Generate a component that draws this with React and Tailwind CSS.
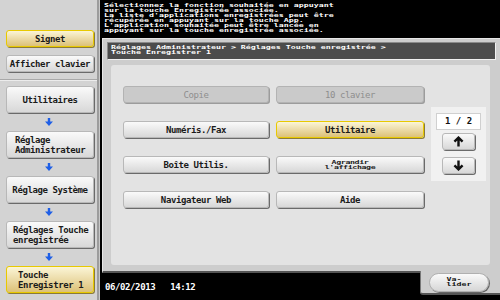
import React from "react";

const mono = "font-['DejaVu_Sans_Mono','Liberation_Mono',monospace]";

const baseBtn =
  "flex items-center justify-center rounded-[3px] border text-[9px] font-bold tracking-[-0.4px] leading-[10px]";
const normalBtn = `${baseBtn} bg-gradient-to-b from-[#fafafa] to-[#d8d8d8] border-[#b8b8b8] text-[#1a1a1a] shadow-[1px_1px_0_#6a6a6a]`;
const yellowBtn = `${baseBtn} bg-gradient-to-b from-[#fbf5d6] to-[#dcc177] border-[#e8c900] text-[#1a1a1a] shadow-[1px_1px_0_#8a7a3a]`;
const disabledBtn = `${baseBtn} bg-[#cacaca] border-[#b3b3b3] !font-normal text-[#8e8e8e] shadow-[1px_1px_0_#9c9c9c]`;

function BlueArrow() {
  return (
    <div className="h-[18px] flex items-center justify-center">
      <svg width="8" height="8" viewBox="0 0 8 8">
        <path d="M2.8 0h2.4v3.5H8L4 8 0 3.5h2.8z" fill="#1f5fe6" />
      </svg>
    </div>
  );
}

function Squashed({ children, className = "" }) {
  return (
    <div
      className={`whitespace-pre text-[8.3px] leading-[8.3px] font-bold scale-y-[0.6] origin-top ${className}`}
    >
      {children}
    </div>
  );
}

function Sidebar() {
  const item = "h-[27px] w-[88px] text-[9px]";
  return (
    <div className="w-[97px] h-full bg-[#d3d3d3] flex flex-col pt-[30px]">
      <div className="px-[6px]">
        <div className={`${yellowBtn} h-[17px] w-[88px]`}>Signet</div>
        <div className={`${normalBtn} h-[17px] w-[88px] mt-[8px]`}>
          Afficher clavier
        </div>
      </div>
      <div className="mt-[7px] h-[2px] border-t border-[#a8a8a8] bg-[#ececec]" />
      <div className="px-[6px] mt-[5px] flex flex-col">
        <div className={`${normalBtn} ${item}`}>Utilitaires</div>
        <BlueArrow />
        <div className={`${normalBtn} ${item} !justify-start pl-[8px] text-left`}>
          Réglage
          <br />
          Administrateur
        </div>
        <BlueArrow />
        <div className={`${normalBtn} ${item}`}>Réglage Système</div>
        <BlueArrow />
        <div className={`${normalBtn} ${item} !justify-start pl-[6px] text-left`}>
          Réglages Touche
          <br />
          enregistrée
        </div>
        <BlueArrow />
        <div className={`${yellowBtn} ${item} !justify-start pl-[11px] text-left`}>
          Touche
          <br />
          Enregistrer 1
        </div>
      </div>
    </div>
  );
}

function Content() {
  const left = "h-[17px] w-[146px]";
  const right = "h-[17px] w-[148px]";
  return (
    <div className="mx-[8px] mt-[5px] mr-[10px] h-[200px] bg-[#e3e3e3] rounded-[3px] flex pl-[12px] pt-[21px]">
      <div className="grid grid-cols-[146px_148px] gap-x-[7px] gap-y-[18px] content-start">
        <div className={`${disabledBtn} ${left}`}>Copie</div>
        <div className={`${disabledBtn} ${right}`}>10 clavier</div>
        <div className={`${normalBtn} ${left}`}>Numéris./Fax</div>
        <div className={`${yellowBtn} ${right}`}>Utilitaire</div>
        <div className={`${normalBtn} ${left}`}>Boîte Utilis.</div>
        <div className={`${normalBtn} ${right} !items-start pt-[3px]`}>
          <Squashed className="text-center">{"Agrandir\nl'affichage"}</Squashed>
        </div>
        <div className={`${normalBtn} ${left}`}>Navigateur Web</div>
        <div className={`${normalBtn} ${right}`}>Aide</div>
      </div>
      <div className="ml-[7px] mt-[21px] w-[55px] h-[74px] bg-[#f1f1f1] flex flex-col items-center pt-[6px]">
        <div className="w-[45px] h-[17px] bg-white border border-[#d0d0d0] flex items-center justify-center text-[9px] font-bold text-[#111]">
          1 / 2
        </div>
        <div className={`${normalBtn} w-[33px] h-[17px] mt-[3px]`}>
          <svg width="11" height="11" viewBox="0 0 10 10">
            <path d="M5 9.5V2M1.3 5.2L5 1.5 8.7 5.2" stroke="#111" strokeWidth="2.2" fill="none" />
          </svg>
        </div>
        <div className={`${normalBtn} w-[33px] h-[17px] mt-[7px]`}>
          <svg width="11" height="11" viewBox="0 0 10 10">
            <path d="M5 0.5V8M1.3 4.8L5 8.5 8.7 4.8" stroke="#111" strokeWidth="2.2" fill="none" />
          </svg>
        </div>
      </div>
    </div>
  );
}

export default function App() {
  return (
    <div className={`w-[500px] h-[300px] flex bg-black overflow-hidden ${mono}`}>
      <Sidebar />
      <div className="w-[3px] h-full bg-[#9c9c9c] border-r border-[#c8c8c8]" />
      <div className="flex-1 flex flex-col bg-black">
        <div className="h-[38px] pl-[4px] pt-[3px] text-white overflow-hidden">
          <Squashed>
            {"Sélectionnez la fonction souhaitée en appuyant\nsur la touche Enregistrée associée.\nLa liste d'applications enregistrées peut être\nrécupérée en appuyant sur la touche App.\nL'application souhaitée peut être lancée en\nappuyant sur la touche enregistrée associée."}
          </Squashed>
        </div>
        <div className="ml-[2px] h-[235px] bg-[#cdcdcd] border-t border-l border-[#e6e6e6] border-b-2 border-b-[#555] flex flex-col">
          <div className="mx-[4px] mt-[3px] mr-[4px] h-[18px] bg-[#4c4c4c] border border-[#8a8a8a] border-r-[#f0f0f0] border-b-[#f0f0f0] pl-[3px] pt-[2px] text-white overflow-hidden">
            <Squashed>
              {"Réglages Administrateur > Réglages Touche enregistrée >\nTouche Enregistrer 1"}
            </Squashed>
          </div>
          <Content />
        </div>
        <div className="flex h-[27px]">
          <div className="w-[320px] flex items-start pt-[8px] pl-[5px] text-white text-[9px] font-bold tracking-[-0.4px]">
            <span>06/02/2013</span>
            <span className="ml-[15px]">14:12</span>
          </div>
          <div className="flex-1 h-[24px] -mt-[2px] bg-[#cdcdcd] border-l border-[#777] border-b-2 border-b-[#555] rounded-bl-[3px] flex items-start pl-[8px] pt-[2px]">
            <div className="w-[60px] h-[19px] rounded-full bg-gradient-to-b from-[#fafafa] to-[#d6d6d6] border border-[#b0b0b0] shadow-[1px_1px_0_#666] flex justify-center pt-[3px] text-[#111]">
              <Squashed className="text-left">{"Va-\nlider"}</Squashed>
            </div>
          </div>
        </div>
      </div>
    </div>
  );
}
